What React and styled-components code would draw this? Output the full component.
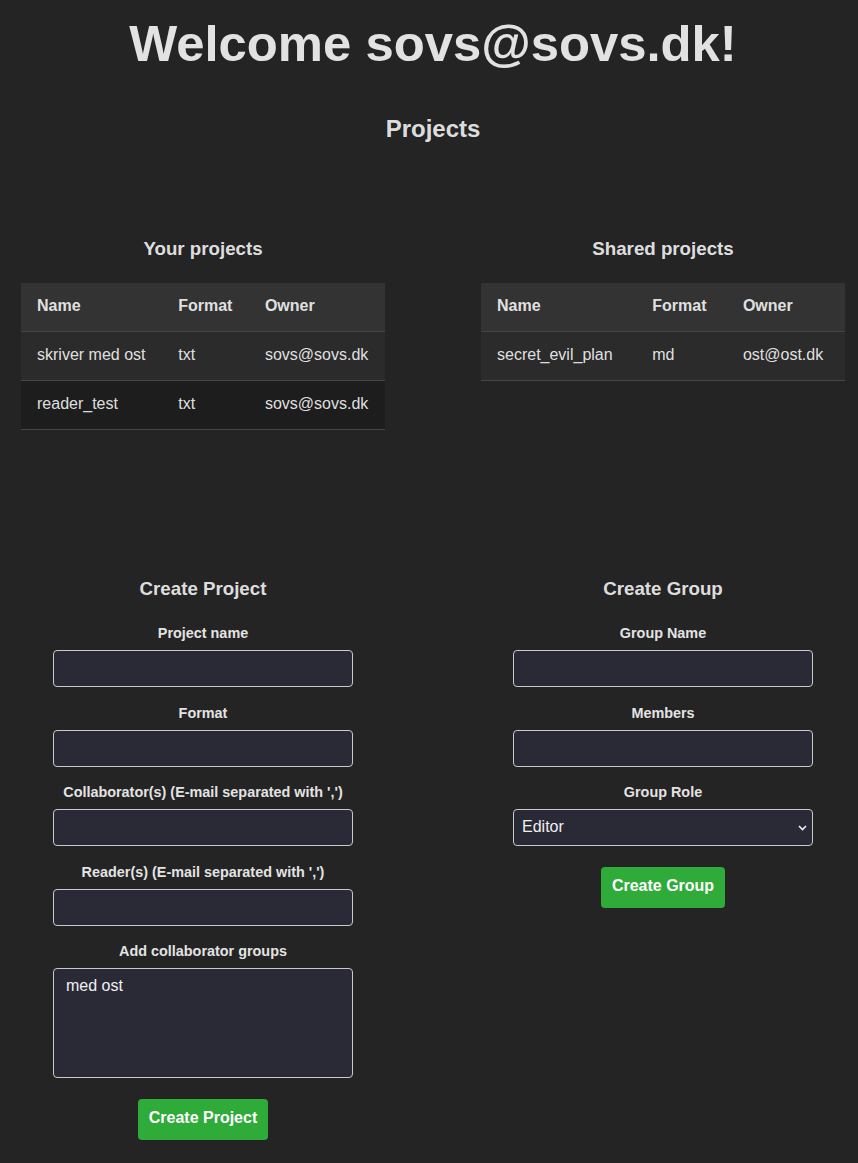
import React from 'react';
import styled, { createGlobalStyle } from 'styled-components';

const GlobalStyle = createGlobalStyle`
    html, body {
        margin: 0;
        background: #242424;
    }
    body {
        font-family: "Liberation Sans", Arial, Helvetica, sans-serif;
        color: rgba(255, 255, 255, 0.87);
    }
`

const Page = styled.div`
    box-sizing: border-box;
    width: 858px;
    padding: 16px 0 24px 8px;
    text-align: center;
`

const Title = styled.h1`
    margin: 0;
    font-size: 50.8px;
    line-height: 56px;
    font-weight: 700;
`

const Heading = styled.h2`
    margin: 43px 0 0;
    font-size: 24px;
    line-height: 28px;
    font-weight: 700;
`

const Columns = styled.div`
    display: grid;
    grid-template-columns: 390px 390px;
    column-gap: 70px;
    align-items: start;
    margin-top: ${props => props.$top}px;
`

const Column = styled.section`
    display: flex;
    flex-direction: column;
    align-items: center;
`

const SubHeading = styled.h3`
    margin: 0 0 ${props => props.$gap}px;
    font-size: 18.72px;
    line-height: 22px;
    font-weight: 700;
`

const Table = styled.table`
    width: 364px;
    border-collapse: collapse;
    text-align: left;
    font-size: 16px;
    line-height: 18px;
`

const HeadRow = styled.tr`
    background: #333333;
    border-bottom: 1px solid #444444;
`

const Row = styled.tr`
    background: ${props => props.$odd ? '#2b2b2b' : '#1d1d1d'};
    border-bottom: 1px solid #474747;
`

const Th = styled.th`
    padding: 14px 16px 16px;
    font-weight: 700;
    white-space: nowrap;
`

const Td = styled.td`
    padding: 14px 16px 16px;
    white-space: nowrap;
`

const Form = styled.form`
    display: flex;
    flex-direction: column;
    align-items: center;
`

const Field = styled.div`
    display: flex;
    flex-direction: column;
    align-items: center;
    margin-bottom: 16.5px;
`

const Label = styled.label`
    font-size: 14.4px;
    line-height: 18px;
    font-weight: 700;
    margin-bottom: 8px;
    color: #e3e3e3;
`

const Input = styled.input`
    box-sizing: border-box;
    width: 300px;
    height: 37px;
    padding: 0 8px;
    border: 1px solid #c9c9c9;
    border-radius: 4px;
    background: #2a2936;
    color: #f0f0f0;
    font: 16px "Liberation Sans", Arial, sans-serif;
    outline: none;
`

const TextArea = styled.textarea`
    box-sizing: border-box;
    display: block;
    width: 300px;
    height: 110px;
    padding: 8px 12px;
    border: 1px solid #c9c9c9;
    border-radius: 4px;
    background: #2a2936;
    color: #f0f0f0;
    font: 16px/18px "Liberation Sans", Arial, sans-serif;
    resize: none;
    outline: none;
`

const SelectWrap = styled.div`
    position: relative;
    width: 300px;
    height: 37px;
`

const Select = styled.select`
    box-sizing: border-box;
    width: 300px;
    height: 37px;
    padding: 0 24px 3px 8px;
    border: 1px solid #c9c9c9;
    border-radius: 4px;
    background: #2a2936;
    color: #f0f0f0;
    font: 16px "Liberation Sans", Arial, sans-serif;
    appearance: none;
    outline: none;
`

const Chevron = styled.svg`
    position: absolute;
    right: 6px;
    top: 16px;
    pointer-events: none;
`

const Button = styled.button`
    margin-top: 4.5px;
    padding: 9px 11px 13px;
    border: none;
    border-radius: 4px;
    background: #2fab3a;
    color: #ffffff;
    font: 700 16px/19px "Liberation Sans", Arial, sans-serif;
    cursor: pointer;
`

const yourProjects = [
    { name: 'skriver med ost', format: 'txt', owner: 'sovs@sovs.dk' },
    { name: 'reader_test', format: 'txt', owner: 'sovs@sovs.dk' },
]

const sharedProjects = [
    { name: 'secret_evil_plan', format: 'md', owner: 'ost@ost.dk' },
]

const ProjectTable = ({ rows }) => (
    <Table>
        <thead>
            <HeadRow>
                <Th>Name</Th>
                <Th>Format</Th>
                <Th>Owner</Th>
            </HeadRow>
        </thead>
        <tbody>
            {rows.map((p, i) => (
                <Row key={p.name} $odd={i % 2 === 0}>
                    <Td>{p.name}</Td>
                    <Td>{p.format}</Td>
                    <Td>{p.owner}</Td>
                </Row>
            ))}
        </tbody>
    </Table>
)

const App = () => {
    return (
        <Page>
            <GlobalStyle />
            <Title>Welcome sovs@sovs.dk!</Title>
            <Heading>Projects</Heading>
            <Columns $top={95}>
                <Column>
                    <SubHeading $gap={23}>Your projects</SubHeading>
                    <ProjectTable rows={yourProjects} />
                </Column>
                <Column>
                    <SubHeading $gap={23}>Shared projects</SubHeading>
                    <ProjectTable rows={sharedProjects} />
                </Column>
            </Columns>
            <Columns $top={148}>
                <Column>
                    <SubHeading $gap={24}>Create Project</SubHeading>
                    <Form onSubmit={e => e.preventDefault()}>
                        <Field>
                            <Label>Project name</Label>
                            <Input type="text" />
                        </Field>
                        <Field>
                            <Label>Format</Label>
                            <Input type="text" />
                        </Field>
                        <Field>
                            <Label>Collaborator(s) (E-mail separated with ',')</Label>
                            <Input type="text" />
                        </Field>
                        <Field>
                            <Label>Reader(s) (E-mail separated with ',')</Label>
                            <Input type="text" />
                        </Field>
                        <Field>
                            <Label>Add collaborator groups</Label>
                            <TextArea defaultValue="med ost" />
                        </Field>
                        <Button type="submit">Create Project</Button>
                    </Form>
                </Column>
                <Column>
                    <SubHeading $gap={24}>Create Group</SubHeading>
                    <Form onSubmit={e => e.preventDefault()}>
                        <Field>
                            <Label>Group Name</Label>
                            <Input type="text" />
                        </Field>
                        <Field>
                            <Label>Members</Label>
                            <Input type="text" />
                        </Field>
                        <Field>
                            <Label>Group Role</Label>
                            <SelectWrap>
                                <Select defaultValue="Editor">
                                    <option>Editor</option>
                                    <option>Reader</option>
                                </Select>
                                <Chevron width="9" height="6" viewBox="0 0 9 6">
                                    <path d="M1 1l3.5 3.5L8 1" fill="none" stroke="#f0f0f0" strokeWidth="1.6" />
                                </Chevron>
                            </SelectWrap>
                        </Field>
                        <Button type="submit">Create Group</Button>
                    </Form>
                </Column>
            </Columns>
        </Page>
    )
}

export default App;
